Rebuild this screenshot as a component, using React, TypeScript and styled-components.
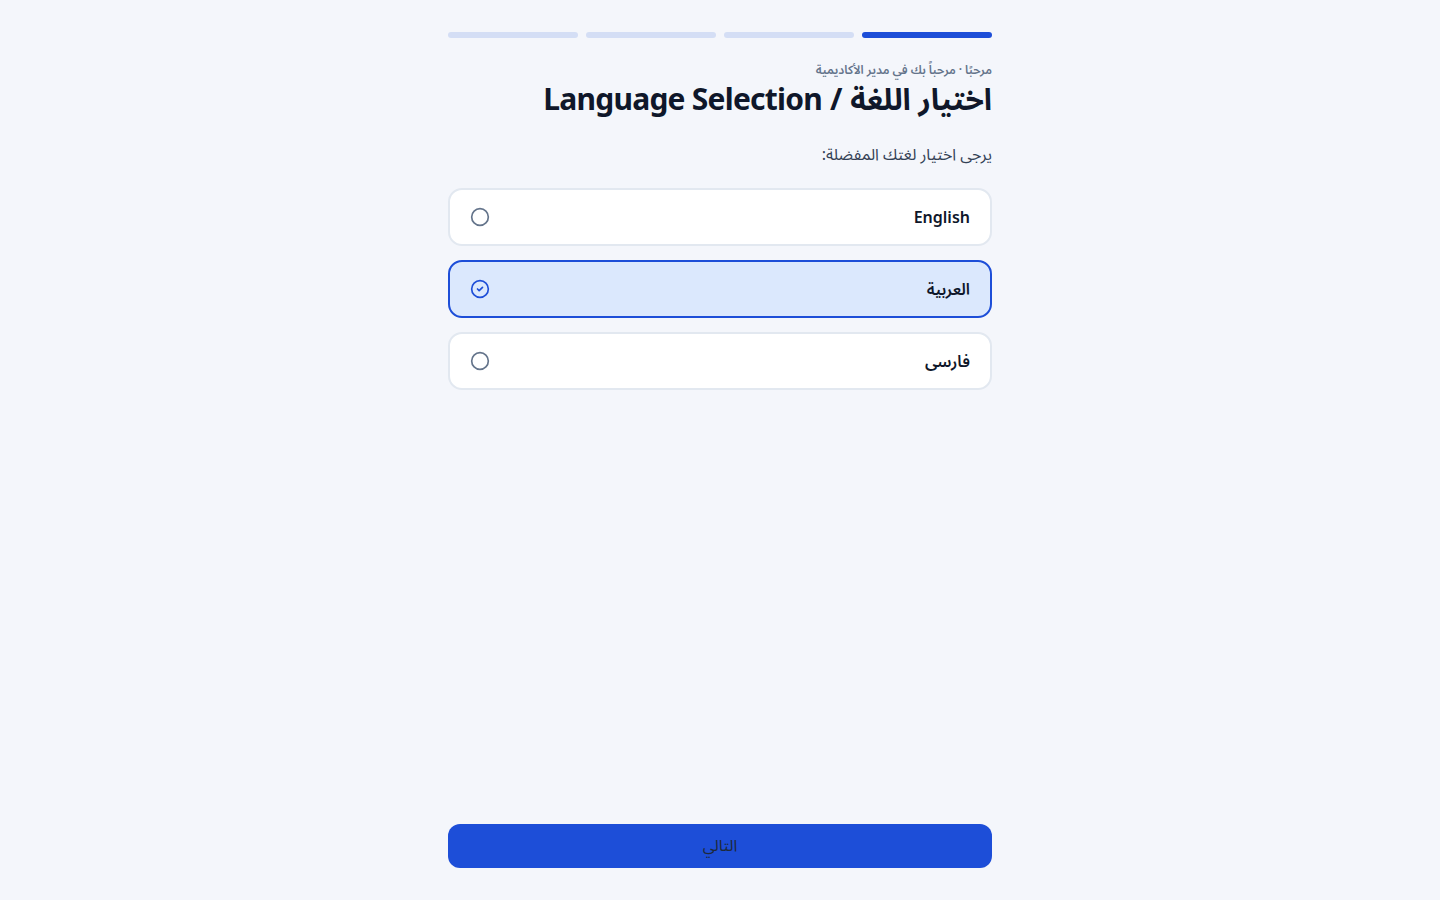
import React, { useState } from 'react';
import styled, { createGlobalStyle } from 'styled-components';
import { Circle, CircleCheck } from 'lucide-react';

const GlobalStyle = createGlobalStyle`
  html, body {
    margin: 0;
    padding: 0;
    background: #f4f6fb;
    font-family: "Noto Sans", "Noto Sans Arabic", "Noto Sans Arabic UI", "Noto Naskh Arabic", sans-serif;
    color: #0f172a;
  }
  * {
    box-sizing: border-box;
  }
`;

const Page = styled.div`
  min-height: 100vh;
  display: flex;
  justify-content: center;
  direction: rtl;
`;

const Column = styled.main`
  width: 544px;
  min-height: 100vh;
  padding: 32px 0;
  display: flex;
  flex-direction: column;
`;

const Progress = styled.div`
  display: flex;
  gap: 8px;
  direction: ltr;
  margin-bottom: 24px;
`;

const Step = styled.div<{ $active?: boolean }>`
  flex: 1;
  height: 6px;
  border-radius: 3px;
  background: ${(p) => (p.$active ? '#1d4ed8' : '#d4def5')};
`;

const Eyebrow = styled.div`
  font-size: 12px;
  line-height: 16px;
  font-weight: 600;
  color: #64748b;
`;

const Dot = styled.span`
  margin: 0 3px;
`;

const Title = styled.h1`
  margin: 3px 0 0;
  font-size: 30px;
  line-height: 36px;
  font-weight: 700;
  letter-spacing: -0.025em;
  color: #0f172a;
`;

const Prompt = styled.p`
  margin: 25px 0 0;
  font-size: 16px;
  line-height: 24px;
  color: #334155;
`;

const Options = styled.div`
  margin-top: 22px;
  display: flex;
  flex-direction: column;
  gap: 14px;
`;

const Option = styled.button<{ $selected?: boolean }>`
  display: flex;
  align-items: center;
  justify-content: space-between;
  width: 100%;
  min-height: 58px;
  padding: 0 20px;
  border-radius: 14px;
  border: 2px solid ${(p) => (p.$selected ? '#1d4ed8' : '#e2e8f0')};
  background: ${(p) => (p.$selected ? '#dbe8fd' : '#ffffff')};
  font-family: inherit;
  font-size: 16px;
  line-height: 24px;
  font-weight: 600;
  color: #0f172a;
  cursor: pointer;
  text-align: right;

  svg {
    flex-shrink: 0;
    color: ${(p) => (p.$selected ? '#1d4ed8' : '#64748b')};
  }
`;

const NextButton = styled.button`
  margin-top: auto;
  width: 100%;
  height: 44px;
  border: none;
  border-radius: 12px;
  background: #1d4ed8;
  font-family: inherit;
  font-size: 16px;
  color: #1e293b;
  cursor: pointer;
`;

const languages = [
  { id: 'en', label: 'English' },
  { id: 'ar', label: 'العربية' },
  { id: 'fa', label: 'فارسی' },
];

export default function App() {
  const [selected, setSelected] = useState('ar');

  return (
    <>
      <GlobalStyle />
      <Page>
        <Column>
          <Progress>
            <Step />
            <Step />
            <Step />
            <Step $active />
          </Progress>
          <Eyebrow>
            مرحبًا<Dot>·</Dot>مرحباً بك في مدير الأكاديمية
          </Eyebrow>
          <Title>اختيار اللغة / Language Selection</Title>
          <Prompt>يرجى اختيار لغتك المفضلة:</Prompt>
          <Options>
            {languages.map((lang) => (
              <Option
                key={lang.id}
                $selected={selected === lang.id}
                onClick={() => setSelected(lang.id)}
              >
                <span>{lang.label}</span>
                {selected === lang.id ? <CircleCheck size={20} /> : <Circle size={20} />}
              </Option>
            ))}
          </Options>
          <NextButton>التالي</NextButton>
        </Column>
      </Page>
    </>
  );
}
